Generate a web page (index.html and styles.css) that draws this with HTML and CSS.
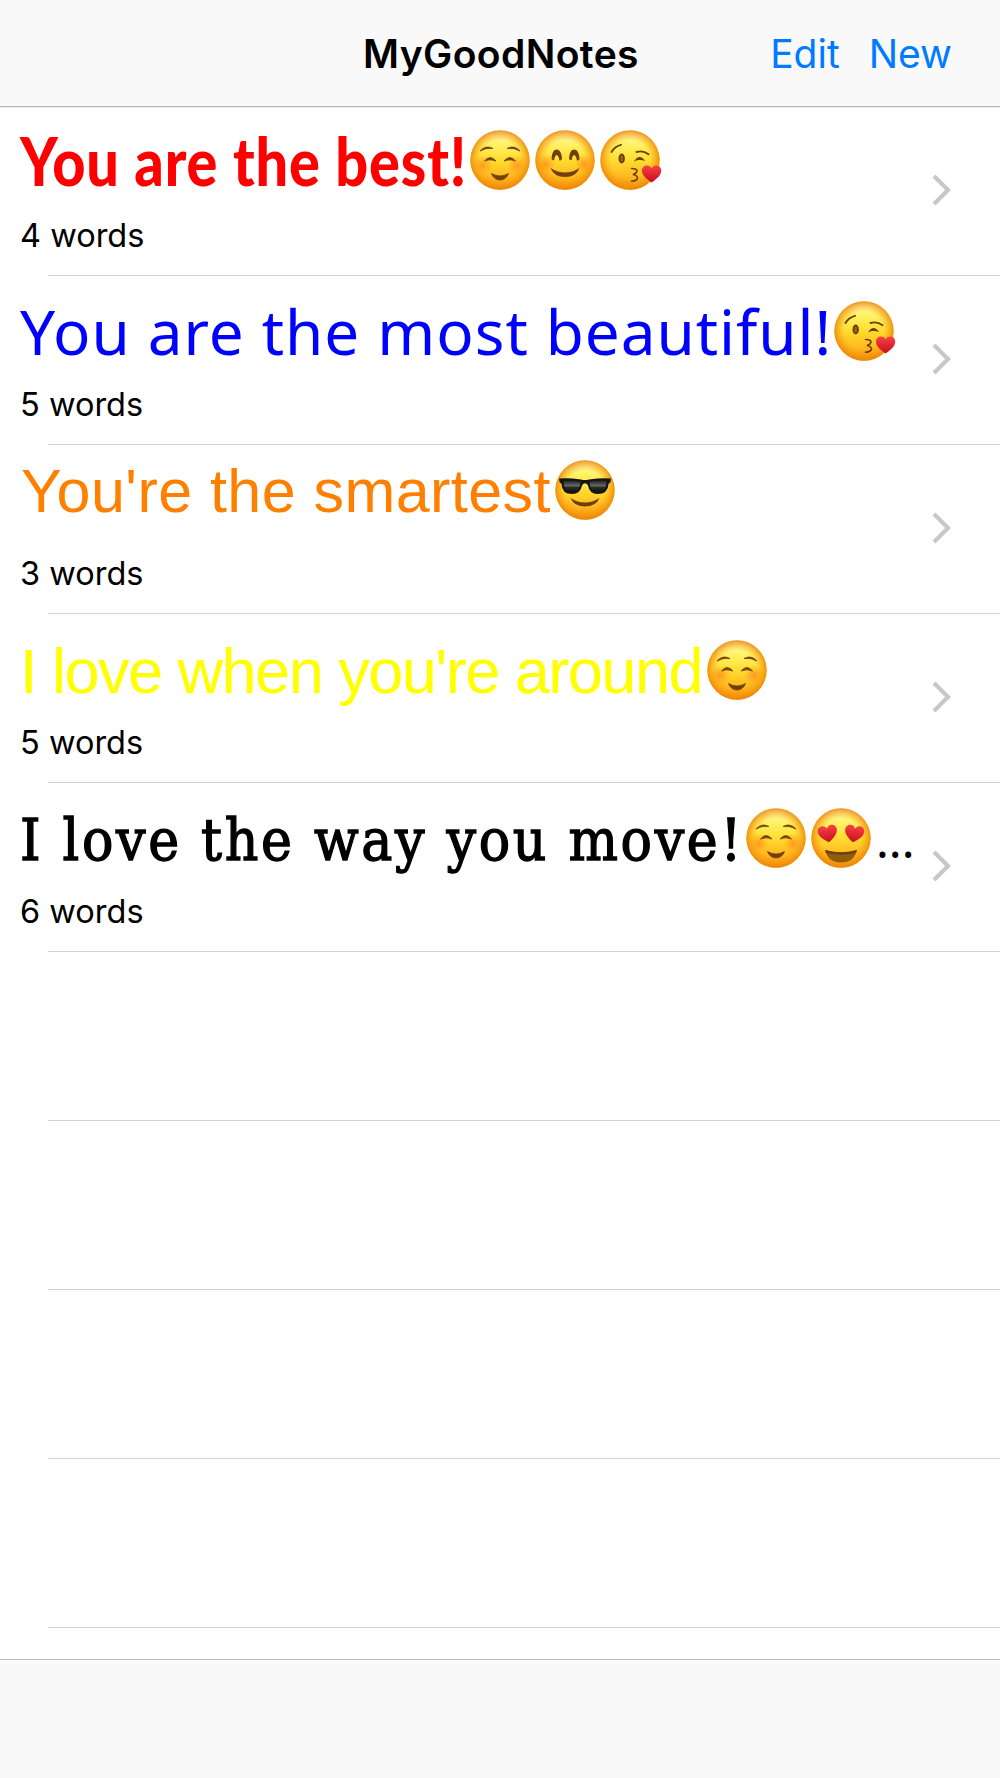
FILE: index.html
```
<!DOCTYPE html>
<html lang="en">
<head>
    <meta charset="UTF-8">
    <meta name="viewport" content="width=device-width, initial-scale=1.0">
    <title>MyGoodNotes</title>
    <link rel="stylesheet" href="styles.css">
</head>
<body>
    <!-- shared emoji drawings -->
    <svg class="symbols" width="0" height="0">
        <defs>
            <linearGradient id="skin" x1="0" y1="0" x2="0" y2="1">
                <stop offset="0" stop-color="#fff9c8"/>
                <stop offset="0.22" stop-color="#fff46a"/>
                <stop offset="0.5" stop-color="#ffdd30"/>
                <stop offset="0.78" stop-color="#ffb81f"/>
                <stop offset="1" stop-color="#f3930a"/>
            </linearGradient>
            <radialGradient id="edge">
                <stop offset="0.65" stop-color="#f79a10" stop-opacity="0"/>
                <stop offset="1" stop-color="#ec8408" stop-opacity="0.85"/>
            </radialGradient>
            <radialGradient id="blush">
                <stop offset="0" stop-color="#ff7a1a" stop-opacity="0.65"/>
                <stop offset="1" stop-color="#ff8c1a" stop-opacity="0"/>
            </radialGradient>
            <linearGradient id="red" x1="0" y1="0" x2="0" y2="1">
                <stop offset="0" stop-color="#fb3f45"/>
                <stop offset="1" stop-color="#c5101c"/>
            </linearGradient>
            <linearGradient id="lens" x1="0" y1="0" x2="0" y2="1">
                <stop offset="0" stop-color="#222"/>
                <stop offset="0.45" stop-color="#666"/>
                <stop offset="0.6" stop-color="#2b2b2b"/>
                <stop offset="1" stop-color="#111"/>
            </linearGradient>
            <g id="face">
                <circle cx="30" cy="30" r="29.7" fill="url(#skin)"/>
                <circle cx="30" cy="30" r="29.7" fill="url(#edge)"/>
            </g>
            <path id="heart" d="M9.5 17C4 13 0 9.5 0 5.2C0 2 2.3 0 5 0C7.2 0 8.8 1.2 9.6 3.2C10.5 1.2 12.2 0 14.3 0C17.1 0 19.2 2.2 19.2 5.2C19.2 9.5 15 13.4 9.5 17Z" fill="url(#red)"/>
            <symbol id="relaxed" viewBox="0 0 62 60">
                <use href="#face"/>
                <circle cx="13" cy="35" r="10" fill="url(#blush)"/>
                <circle cx="47" cy="35" r="10" fill="url(#blush)"/>
                <g fill="#70400a" stroke="#70400a" stroke-width="0.8">
                    <path d="M10 21Q16 14.5 23 18.5Q16 17.5 10 21Z"/>
                    <path d="M50 21Q44 14.5 37 18.5Q44 17.5 50 21Z"/>
                    <path d="M14.5 31Q20 24 26 31Q20 28.5 14.5 31Z"/>
                    <path d="M34 31Q40 24 45.5 31Q40 28.5 34 31Z"/>
                    <path d="M21.5 43.5Q30 48.5 38.5 43.5Q36 50 30 50Q24 50 21.5 43.5Z"/>
                </g>
            </symbol>
            <symbol id="blushing" viewBox="0 0 62 60">
                <use href="#face"/>
                <circle cx="11" cy="34" r="10" fill="url(#blush)"/>
                <circle cx="49" cy="34" r="10" fill="url(#blush)"/>
                <g fill="#70400a">
                    <path d="M16.5 29Q17 19.5 21.5 19.5Q26.5 19.5 27 29Q24 33 24 28Q21.5 22 19.5 28Q19.5 32 16.5 29Z"/>
                    <path d="M34 29Q34.5 19.5 39 19.5Q44 19.5 44.5 29Q41.5 33 41.5 28Q39 22 37 28Q37 32 34 29Z"/>
                    <path d="M15.5 38Q30 47 44.5 38Q41 47 30 47Q19 47 15.5 38Z"/>
                </g>
            </symbol>
            <symbol id="kiss" viewBox="0 0 62 60">
                <use href="#face"/>
                <g fill="none" stroke="#70400a" stroke-linecap="round" stroke-width="1.9">
                    <path d="M11.5 22Q14.5 16.5 21 14.8"/>
                    <path d="M36.5 22Q43 20 48.5 24.2"/>
                    <path d="M31.5 38.5Q37 38.5 37 41Q36.5 43.5 33 44.5Q37.5 45.5 37.5 48Q37 50.8 31.5 51.2" stroke-width="1.6"/>
                </g>
                <ellipse cx="21.7" cy="28.5" rx="3.2" ry="5" fill="#70400a"/>
                <ellipse cx="21.7" cy="28.5" rx="1.3" ry="3" fill="#9a6818"/>
                <path d="M34 31.5Q39.5 23 45 31Q39 29 34 31.5Z" fill="#70400a"/>
                <use href="#heart" x="42" y="35.5"/>
            </symbol>
            <symbol id="cool" viewBox="0 0 62 60">
                <use href="#face"/>
                <path d="M4 18.5Q13 17.5 26 19.5Q30 20.5 34 19.5Q47 17.5 56 18.5L55.5 22L53.5 24Q53 34 42.5 34Q34.5 34 32.8 25Q30 21.5 27.2 25Q25.5 34 17 34Q7 34 6.5 24L4.5 22Z" fill="#151515"/>
                <path d="M8.5 21Q17 20 25.5 22Q25 32 17 32Q8.5 32 8.5 21Z" fill="url(#lens)"/>
                <path d="M51.5 21Q43 20 34.5 22Q35 32 43 32Q51.5 32 51.5 21Z" fill="url(#lens)"/>
                <path d="M15.5 38Q30 47 44.5 38Q41 46.5 30 46.5Q19 46.5 15.5 38Z" fill="#70400a"/>
            </symbol>
            <symbol id="heart-eyes" viewBox="0 0 62 60">
                <use href="#face"/>
                <use href="#heart" transform="translate(6 19) rotate(-9)"/>
                <use href="#heart" transform="translate(35 16) rotate(9)"/>
                <path d="M14 42Q30 46.5 46 42Q43 54.5 30 54.5Q17 54.5 14 42Z" fill="#8f5d0c"/>
                <path d="M14 42Q30 46.5 46 42L45 45Q30 48.5 15 45Z" fill="#70400a"/>
            </symbol>
            <symbol id="chevron" viewBox="0 0 20 32">
                <path d="M2 2L16 16L2 30" fill="none" stroke="#c7c7cc" stroke-width="4.2"/>
            </symbol>
        </defs>
    </svg>

    <header class="navbar">
        <h1>MyGoodNotes</h1>
        <nav class="nav-buttons">
            <a>Edit</a>
            <a>New</a>
        </nav>
    </header>

    <main class="notes">
        <div class="note">
            <div class="note-body">
                <div class="note-title best">
                    <span class="note-text">You are the best!</span>
                    <svg class="emoji"><use href="#relaxed"/></svg>
                    <svg class="emoji"><use href="#blushing"/></svg>
                    <svg class="emoji"><use href="#kiss"/></svg>
                </div>
                <p>4 words</p>
            </div>
            <svg class="chevron"><use href="#chevron"/></svg>
        </div>
        <div class="note">
            <div class="note-body">
                <div class="note-title beautiful">
                    <span class="note-text">You are the most beautiful!</span>
                    <svg class="emoji"><use href="#kiss"/></svg>
                </div>
                <p>5 words</p>
            </div>
            <svg class="chevron"><use href="#chevron"/></svg>
        </div>
        <div class="note">
            <div class="note-body">
                <div class="note-title smartest">
                    <span class="note-text">You're the smartest</span>
                    <svg class="emoji"><use href="#cool"/></svg>
                </div>
                <p>3 words</p>
            </div>
            <svg class="chevron"><use href="#chevron"/></svg>
        </div>
        <div class="note">
            <div class="note-body">
                <div class="note-title around">
                    <span class="note-text">I love when you're around</span>
                    <svg class="emoji"><use href="#relaxed"/></svg>
                </div>
                <p>5 words</p>
            </div>
            <svg class="chevron"><use href="#chevron"/></svg>
        </div>
        <div class="note">
            <div class="note-body">
                <div class="note-title move">
                    <span class="note-text">I love the way you move!</span>
                    <svg class="emoji"><use href="#relaxed"/></svg>
                    <svg class="emoji"><use href="#heart-eyes"/></svg>
                    <span class="more">...</span>
                </div>
                <p>6 words</p>
            </div>
            <svg class="chevron"><use href="#chevron"/></svg>
        </div>
        <div class="note"></div>
        <div class="note"></div>
        <div class="note"></div>
        <div class="note"></div>
    </main>

    <footer class="toolbar"></footer>
</body>
</html>
```
FILE: styles.css
```
* {
    box-sizing: border-box;
}
body {
    margin: 0;
    height: 1778px;
    display: flex;
    flex-direction: column;
    font-family: Inter, "Liberation Sans", sans-serif;
    background: #fff;
    color: #000;
    overflow: hidden;
}
.symbols {
    position: absolute;
}
.navbar {
    flex: none;
    height: 107px;
    display: grid;
    grid-template-columns: 1fr auto 1fr;
    align-items: center;
    padding: 0 48px 0 50px;
    background: #f9f9f9;
    border-bottom: 1px solid #b9b9b9;
    box-shadow: 0 1px 0 #ececec;
}
.navbar h1 {
    grid-column: 2;
    margin: 0;
    font-size: 39px;
    font-weight: 600;
    letter-spacing: 0.4px;
}
.nav-buttons {
    display: flex;
    justify-content: flex-end;
    gap: 29px;
    font-size: 39px;
    color: #007aff;
}
.notes {
    flex: 1;
    min-height: 0;
}
.note {
    height: 169px;
    display: flex;
    background: linear-gradient(#d3d3d6, #d3d3d6) 48px 100% / 100% 1px no-repeat;
}
.note-body {
    flex: 1;
    min-width: 0;
    padding-left: 20px;
}
.note-title {
    height: 109px;
    display: flex;
    align-items: center;
    white-space: nowrap;
}
.note-text {
    flex: none;
    line-height: 80px;
}
.note-body p {
    margin: 0;
    font-size: 32.5px;
    line-height: 40px;
}
.emoji {
    flex: none;
    width: 62px;
    height: 60px;
    margin-right: 3px;
}
.chevron {
    flex: none;
    width: 20px;
    height: 32px;
    margin: 67px 48px 0 0;
}

/* each note keeps its own font and colour */
.note-title.best {
    height: 106px;
    margin-bottom: 3px;
}
.best .note-text {
    width: 450px;
    font-family: Lato, sans-serif;
    font-weight: 900;
    font-size: 67px;
    letter-spacing: 1px;
    transform: scaleX(0.86);
    transform-origin: left;
    color: #f00;
}
.beautiful .note-text {
    width: 814px;
    font-family: "Noto Sans", sans-serif;
    font-size: 62px;
    letter-spacing: 0.95px;
    color: #00f;
}
.note-title.smartest {
    height: 90px;
    margin-bottom: 19px;
}
.smartest .note-text {
    width: 535px;
    padding: 2px 0 0 1px;
    font-family: "Liberation Sans", sans-serif;
    font-size: 61px;
    letter-spacing: 0.45px;
    color: #ff8000;
}
.note-title.around {
    padding-top: 2px;
}
.around .note-text {
    width: 687px;
    padding-top: 2px;
    font-family: "Liberation Sans", sans-serif;
    font-size: 63px;
    letter-spacing: -1.5px;
    color: #ff0;
}
.move .note-text {
    width: 726px;
    padding-top: 5px;
    font-family: "DejaVu Serif Condensed", "DejaVu Serif", serif;
    font-size: 58px;
    letter-spacing: 2.7px;
    -webkit-text-stroke: 1.3px #000;
}
.more {
    font-family: "Noto Sans", sans-serif;
    font-size: 48px;
    padding-top: 4px;
}
.toolbar {
    flex: none;
    height: 119px;
    background: #f9f9f9;
    border-top: 1px solid #bfbfbf;
}
```
